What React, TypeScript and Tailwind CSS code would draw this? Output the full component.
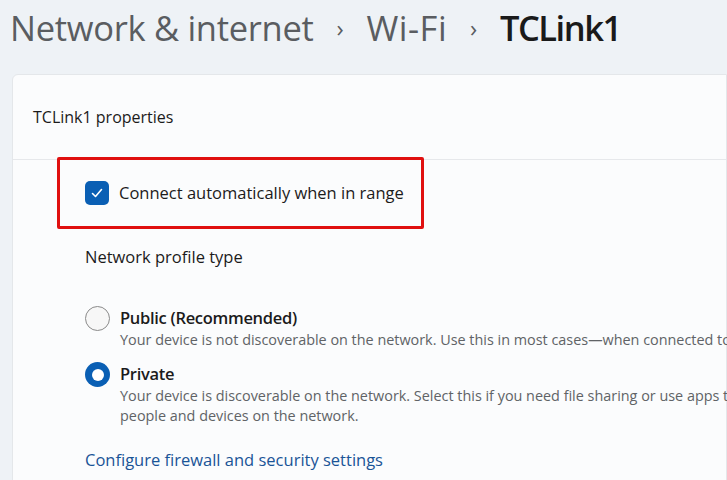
import React from "react";

function Radio({ checked }: { checked?: boolean }) {
  if (checked) {
    return <div className="w-[25px] h-[25px] rounded-full bg-[#0a5fb4] flex items-center justify-center shrink-0">
      <div className="w-[12px] h-[12px] rounded-full bg-white" />
    </div>
  }
  return <div className="w-[25px] h-[25px] rounded-full border border-[#8a8a8a] bg-[#f7f7f7] shrink-0" />
}

export default function App() {
  return <div className="w-[727px] h-[480px] overflow-hidden bg-[#eef2f6] text-[#1b1b1b]" style={{ fontFamily: '"Open Sans", "Noto Sans", sans-serif' }}>
    <div className="flex items-center h-[56px] pl-[10px] text-[34.5px] tracking-[-0.3px]">
      <span className="text-[#5a5d61]">Network &amp; internet</span>
      <span className="text-[#5a5d61] text-[24px] mx-[23px]">›</span>
      <span className="text-[#5a5d61] tracking-[0.5px]">Wi-Fi</span>
      <span className="text-[#5a5d61] text-[24px] mx-[23px]">›</span>
      <span className="font-semibold text-[#1a1a1a] tracking-[-1.5px]">TCLink1</span>
    </div>
    <div className="ml-[12px] mt-[18px] bg-[#fbfcfd] border border-[#e4e7ea] rounded-tl-[6px] h-[420px]">
      <div className="h-[84px] flex items-center pl-[20px] text-[16px]">TCLink1 properties</div>
      <div className="border-t border-[#e6e8eb]">
        <div className="ml-[44px] -mt-[3px] w-[367px] h-[72px] border-[3px] border-[#e01010] rounded-[2px] flex items-center pl-[25px] gap-[10px]">
          <div className="w-[24px] h-[24px] rounded-[5px] bg-[#0a5fb4] flex items-center justify-center">
            <svg width="14" height="14" viewBox="0 0 14 14" fill="none"><path d="M2.5 7.5 L5.5 10.5 L11.5 3.5" stroke="white" strokeWidth="1.6" strokeLinecap="round" strokeLinejoin="round" /></svg>
          </div>
          <span className="text-[16.5px]">Connect automatically when in range</span>
        </div>
        <div className="pl-[72px]">
          <div className="mt-[16px] h-[24px] flex items-center text-[16.5px]">Network profile type</div>
          <div className="mt-[37px] flex gap-[10px]">
            <div><Radio /></div>
            <div className="flex flex-col">
              <span className="text-[16.5px] font-semibold leading-[24px] tracking-[-0.3px]">Public (Recommended)</span>
              <span className="text-[14.4px] text-[#606366] leading-[20px] whitespace-nowrap">Your device is not discoverable on the network. Use this in most cases—when connected to a network at home, work, or in a public place.</span>
            </div>
          </div>
          <div className="mt-[12px] flex gap-[10px]">
            <div><Radio checked /></div>
            <div className="flex flex-col">
              <span className="text-[16.5px] font-semibold leading-[24px] tracking-[-0.3px]">Private</span>
              <span className="text-[14.4px] text-[#606366] leading-[20px] whitespace-nowrap">Your device is discoverable on the network. Select this if you need file sharing or use apps that communicate over this network. You should know and trust the</span>
              <span className="text-[14.4px] text-[#606366] leading-[20px]">people and devices on the network.</span>
            </div>
          </div>
          <div className="mt-[22px] text-[16.5px] text-[#1a5497]">Configure firewall and security settings</div>
        </div>
      </div>
    </div>
  </div>
}
